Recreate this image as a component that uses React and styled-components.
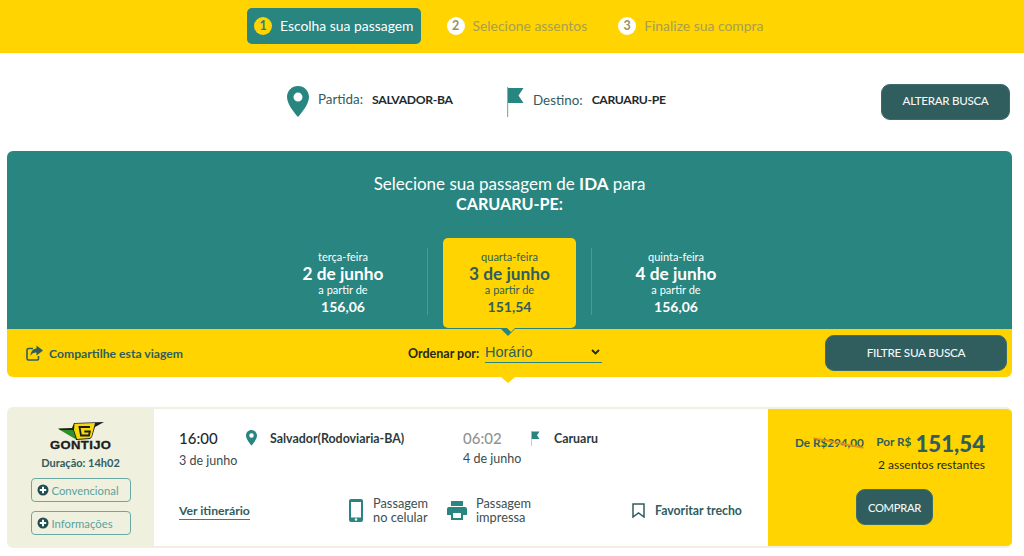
import React from "react";
import styled, { createGlobalStyle } from "styled-components";

const yellow = "#ffd400";
const teal = "#288580";
const dark = "#305d5e";
const cream = "#f0f0df";

const Global = createGlobalStyle`
  html, body {
    margin: 0;
    padding: 0;
    background: #fff;
    font-family: "Lato", "Noto Sans", sans-serif;
    overflow: hidden;
  }
  * { box-sizing: border-box; }
`;

const Page = styled.div`
  width: 1024px;
  height: 556px;
`;

const StepBar = styled.div`
  height: 53px;
  background: ${yellow};
  padding: 8px 0 0 247px;
  display: flex;
  align-items: flex-start;
`;

const Step = styled.div`
  height: 36px;
  display: flex;
  align-items: center;
  gap: 8px;
  padding: 0 7px 1px;
  margin-right: ${(p) => p.$gap || 0}px;
  border-radius: 5px;
  background: ${(p) => (p.$active ? teal : "transparent")};
  color: ${(p) => (p.$active ? "#fff" : "#a89f52")};
  font-size: 13.9px;
  white-space: nowrap;
`;

const StepNum = styled.span`
  width: 18px;
  height: 18px;
  border-radius: 50%;
  display: flex;
  align-items: center;
  justify-content: center;
  font-size: 12.5px;
  font-weight: 700;
  background: ${(p) => (p.$active ? yellow : "#fff")};
  color: ${(p) => (p.$active ? teal : "#96906a")};
`;

const SearchRow = styled.div`
  height: 98px;
  display: flex;
  align-items: center;
  padding: 0 14px 0 287px;
`;

const Place = styled.div`
  display: flex;
  align-items: center;
  width: ${(p) => p.$width}px;
`;

const PlaceLabel = styled.span`
  color: ${dark};
  font-size: 13.4px;
  margin: 0 9px 5px ${(p) => p.$left}px;
`;

const PlaceValue = styled.b`
  color: #1e2b2e;
  font-size: 12.2px;
  letter-spacing: -0.35px;
  margin-bottom: 5px;
`;

const DarkButton = styled.button`
  height: 36px;
  width: ${(p) => p.$width}px;
  margin-left: ${(p) => p.$left || 0}px;
  background: ${dark};
  color: #f2f6f4;
  border: 1px solid #3c6d6c;
  border-radius: 9px;
  font-family: inherit;
  font-size: ${(p) => p.$size || 11.6}px;
  font-weight: 500;
  letter-spacing: -0.3px;
  padding: 0 0 ${(p) => p.$lift ?? 2}px;
`;

const Panel = styled.section`
  margin: 0 12px 0 7px;
  position: relative;
`;

const TealArea = styled.div`
  height: 178px;
  background: ${teal};
  border-radius: 6px 6px 0 0;
  padding-top: 23px;
  color: #fff;
`;

const Heading = styled.h1`
  margin: 0;
  text-align: center;
  font-size: 17px;
  line-height: 20px;
  font-weight: 400;
  b { font-weight: 700; }
  b + br + b { font-size: 16.2px; }
`;

const DateRow = styled.div`
  display: flex;
  padding-left: 252px;
  margin-top: 24px;
`;

const DateItem = styled.div`
  width: ${(p) => p.$width}px;
  height: 90px;
  display: flex;
  justify-content: ${(p) => (p.$selected ? "center" : "flex-start")};
`;

const DateBody = styled.div`
  width: ${(p) => p.$width}px;
  height: 90px;
  padding-top: 12px;
  text-align: center;
  border-radius: 5px;
  background: ${(p) => (p.$selected ? yellow : "transparent")};
  color: ${(p) => (p.$selected ? dark : "#fff")};
`;

const Divider = styled.div`
  width: 1px;
  height: 67px;
  margin-top: 10px;
  background: #4b9a95;
`;

const Weekday = styled.div`
  font-size: 11px;
  line-height: 14px;
`;

const DayName = styled.div`
  font-size: 17.3px;
  line-height: 20px;
  font-weight: 700;
`;

const From = styled.div`
  font-size: 11px;
  line-height: 12px;
`;

const DayPrice = styled.div`
  font-size: 14px;
  line-height: 22px;
  font-weight: 700;
`;

const Toolbar = styled.div`
  height: 48px;
  background: ${yellow};
  border-radius: 0 0 6px 6px;
  display: flex;
  align-items: center;
  padding: 0 5px 0 19px;
  position: relative;
`;

const ArrowDown = styled.div`
  position: absolute;
  left: 494px;
  top: ${(p) => (p.$outer ? "48px" : "0")};
  width: 0;
  height: 0;
  border-left: 7px solid transparent;
  border-right: 7px solid transparent;
  border-top: ${(p) => (p.$outer ? 6 : 7)}px solid ${(p) => (p.$outer ? yellow : teal)};
`;

const ArrowInner = styled.div`
  position: absolute;
  left: 499px;
  top: -2px;
  width: 0;
  height: 0;
  border-left: 5px solid transparent;
  border-right: 5px solid transparent;
  border-top: 5px solid ${yellow};
`;

const Share = styled.div`
  display: flex;
  align-items: center;
  gap: 6px;
  width: 382px;
  font-size: 12.2px;
  font-weight: 700;
  color: ${dark};
`;

const SortLabel = styled.span`
  width: 77px;
  font-size: 12.5px;
  font-weight: 700;
  color: #232a1a;
`;

const SelectWrap = styled.div`
  position: relative;
  width: 117px;
  height: 21px;
  margin-top: -2px;
  border-bottom: 1px solid ${teal};
  svg {
    position: absolute;
    right: 2px;
    top: 6px;
  }
`;

const SortSelect = styled.select`
  appearance: none;
  display: block;
  width: 100%;
  height: 20px;
  border: 0;
  padding: 0;
  background: transparent;
  font-family: "Liberation Sans", sans-serif;
  font-size: 14.5px;
  color: ${dark};
`;

const Card = styled.article`
  margin: 30px 12px 0 7px;
  height: 141px;
  display: flex;
  border-radius: 6px;
  overflow: hidden;
  border-top: 2px solid ${cream};
  border-bottom: 2px solid ${cream};
`;

const Company = styled.div`
  width: 147px;
  background: ${cream};
  display: flex;
  flex-direction: column;
  align-items: center;
  padding-top: 13px;
`;

const LogoText = styled.div`
  font-family: "Liberation Sans", sans-serif;
  font-weight: 700;
  font-size: 10.5px;
  line-height: 10px;
  letter-spacing: 0.3px;
  color: #1c1c1c;
  -webkit-text-stroke: 0.3px #1c1c1c;
  transform: scaleX(1.24);
`;

const Duration = styled.div`
  margin: 6px 0 -1px;
  font-size: 11px;
  line-height: 14px;
  font-weight: 700;
  color: ${dark};
`;

const TagButton = styled.div`
  width: 100px;
  height: 24px;
  margin-top: 9px;
  border: 1.5px solid #6aa9a3;
  border-radius: 4px;
  display: flex;
  align-items: center;
  gap: 3px;
  padding-left: 5px;
  font-size: 11.3px;
  color: #5aa29c;
`;

const Middle = styled.div`
  width: 614px;
  padding: 19px 0 0 25px;
  background: #fff;
`;

const TopRow = styled.div`
  display: flex;
  height: 66px;
`;

const Leg = styled.div`
  width: ${(p) => p.$width}px;
`;

const LegLine = styled.div`
  display: flex;
  align-items: center;
  height: 20px;
`;

const Time = styled.span`
  width: ${(p) => p.$width}px;
  font-size: 15px;
  font-weight: 500;
  color: ${(p) => (p.$muted ? "#8f9393" : "#1e2b2e")};
`;

const Terminal = styled.span`
  margin-left: ${(p) => p.$left}px;
  font-size: 12.4px;
  font-weight: 700;
  color: #2c3a3c;
`;

const LegDate = styled.div`
  font-size: 12.5px;
  color: #3d4a4c;
  margin-top: ${(p) => p.$top}px;
`;

const BottomRow = styled.div`
  display: flex;
  align-items: center;
  height: 32px;
`;

const Itinerary = styled.div`
  width: 170px;
  font-size: 12.2px;
  font-weight: 700;
  color: ${dark};
  span {
    border-bottom: 1px solid ${teal};
    padding-bottom: 1px;
  }
`;

const Ticket = styled.div`
  width: ${(p) => p.$width}px;
  display: flex;
  align-items: center;
  gap: ${(p) => p.$gap}px;
  font-size: 12.8px;
  line-height: 14px;
  color: #3d4f50;
`;

const Favorite = styled.div`
  display: flex;
  align-items: center;
  gap: 10px;
  margin-left: 6px;
  font-size: 12.3px;
  font-weight: 700;
  color: ${dark};
`;

const PriceBox = styled.div`
  flex: 1;
  background: ${yellow};
  padding: 21px 27px 0 27px;
  display: flex;
  flex-direction: column;
  align-items: flex-end;
`;

const PriceLine = styled.div`
  display: flex;
  align-items: center;
  justify-content: space-between;
  width: 100%;
  height: 27px;
  color: ${dark};
  font-weight: 700;
`;

const OldPriceGroup = styled.span`
  font-size: 11.7px;
  margin-bottom: 3px;
`;

const OldPrice = styled.span`
  position: relative;
  &::after {
    content: "";
    position: absolute;
    left: 0;
    right: 0;
    top: 7px;
    height: 1.5px;
    background: #e8901a;
    transform: rotate(11deg);
  }
`;

const NowGroup = styled.span`
  display: flex;
  align-items: center;
  gap: 4px;
  font-size: 11.8px;
  span { margin-bottom: 4px; }
`;

const NewPrice = styled.b`
  font-size: 22.2px;
`;

const Seats = styled.div`
  font-size: 12px;
  line-height: 16px;
  color: #232a1a;
`;

const BuyRow = styled.div`
  align-self: flex-start;
  margin: 16px 0 0 61px;
`;

function Pin({ size = 22 }) {
  return (
    <svg width={size} height={size * 1.42} viewBox="0 0 22 31">
      <path fill={teal} fillRule="evenodd" d="M11 0C4.9 0 0 4.9 0 11c0 7.4 8 16.4 11 20 3-3.600 11-12.600 11-20C22 4.900 17.100 0 11 0zm0 6.500a4.500 4.500 0 1 1 0 9 4.500 4.500 0 0 1 0-9z" />
    </svg>
  );
}

function Flag({ width = 17, height = 30 }) {
  return (
    <svg width={width} height={height} viewBox="0 0 17 30">
      <path fill="#7fb5b1" d="M0 0h1.200v30H0z" />
      <path fill={teal} d="M1 1h15.500l-5 7.500 5 7.500H1z" />
    </svg>
  );
}

function Plus() {
  return (
    <svg width="12" height="12" viewBox="0 0 12 12">
      <circle cx="6" cy="6" r="5.500" fill="#1f4f50" />
      <path fill="#fff" d="M5 2.800h2V5h2.200v2H7v2.200H5V7H2.800V5H5z" />
    </svg>
  );
}

function Logo() {
  return (
    <svg width="46" height="18" viewBox="0 0 46 18">
      <path fill="#1c1c1c" d="M0 6.500 14 6 16 1 46 0 37 5 34 15 32 17 18 18 15 9 2 8z" />
      <path fill="#2f8f2a" d="M2 8h13l3 9.500z" />
      <path fill="#f5d90a" d="M16.500 1.700 37 1 33.500 14.500 32 16 19 17 16 8z" />
      <path fill="none" stroke="#1c1c1c" strokeWidth="1.800" d="M32 5H21.500l1.500 8.500h8l.8-4h-5.500" />
    </svg>
  );
}

export default function App() {
  return (
    <Page>
      <Global />
      <StepBar>
        <Step $active $gap={19}>
          <StepNum $active>1</StepNum>Escolha sua passagem
        </Step>
        <Step $gap={17}>
          <StepNum>2</StepNum>Selecione assentos
        </Step>
        <Step>
          <StepNum>3</StepNum>Finalize sua compra
        </Step>
      </StepBar>

      <SearchRow>
        <Place $width={220}>
          <Pin />
          <PlaceLabel $left={9}>Partida:</PlaceLabel>
          <PlaceValue>SALVADOR-BA</PlaceValue>
        </Place>
        <Place $width={374}>
          <Flag />
          <PlaceLabel $left={9}>Destino:</PlaceLabel>
          <PlaceValue>CARUARU-PE</PlaceValue>
        </Place>
        <DarkButton $width={129} $lift={3}>ALTERAR BUSCA</DarkButton>
      </SearchRow>

      <Panel>
        <TealArea>
          <Heading>
            Selecione sua passagem de <b>IDA</b> para
            <br />
            <b>CARUARU-PE:</b>
          </Heading>
          <DateRow>
            <DateItem $width={168}>
              <DateBody $width={168}>
                <Weekday>terça-feira</Weekday>
                <DayName>2 de junho</DayName>
                <From>a partir de</From>
                <DayPrice>156,06</DayPrice>
              </DateBody>
            </DateItem>
            <Divider />
            <DateItem $width={163} $selected>
              <DateBody $width={133} $selected>
                <Weekday>quarta-feira</Weekday>
                <DayName>3 de junho</DayName>
                <From>a partir de</From>
                <DayPrice>151,54</DayPrice>
              </DateBody>
            </DateItem>
            <Divider />
            <DateItem $width={168}>
              <DateBody $width={168}>
                <Weekday>quinta-feira</Weekday>
                <DayName>4 de junho</DayName>
                <From>a partir de</From>
                <DayPrice>156,06</DayPrice>
              </DateBody>
            </DateItem>
          </DateRow>
        </TealArea>
        <Toolbar>
          <ArrowDown />
          <ArrowInner />
          <Share>
            <svg width="17" height="16" viewBox="0 0 17 16">
              <path fill="none" stroke={dark} strokeWidth="1.600" d="M7 3.500H2.500a1.500 1.500 0 0 0-1.500 1.500v8.500A1.500 1.500 0 0 0 2.500 15h8.500a1.500 1.500 0 0 0 1.500-1.500V11" />
              <path fill={dark} d="M10.500 0.500 17 5.500l-6.500 5V7.500C7.500 7.500 5.500 8.500 4.500 11c0-4 2-7 6-7.500z" />
            </svg>
            Compartilhe esta viagem
          </Share>
          <SortLabel>Ordenar por:</SortLabel>
          <SelectWrap>
            <SortSelect defaultValue="Horário">
              <option>Horário</option>
              <option>Preço</option>
            </SortSelect>
            <svg width="9" height="8" viewBox="0 0 9 8">
              <path fill="none" stroke="#1e2b2e" strokeWidth="1.800" d="M1 2l3.500 3.500L8 2" />
            </svg>
          </SelectWrap>
          <DarkButton $width={182} $left={223} $size={11.8}>FILTRE SUA BUSCA</DarkButton>
          <ArrowDown $outer />
        </Toolbar>
      </Panel>

      <Card>
        <Company>
          <Logo />
          <LogoText>GONTIJO</LogoText>
          <Duration>Duração: 14h02</Duration>
          <TagButton>
            <Plus />
            Convencional
          </TagButton>
          <TagButton>
            <Plus />
            Informações
          </TagButton>
        </Company>
        <Middle>
          <TopRow>
            <Leg $width={284}>
              <LegLine>
                <Time $width={67}>16:00</Time>
                <Pin size={11} />
                <Terminal $left={13}>Salvador(Rodoviaria-BA)</Terminal>
              </LegLine>
              <LegDate $top={5}>3 de junho</LegDate>
            </Leg>
            <Leg $width={200}>
              <LegLine>
                <Time $width={68} $muted>06:02</Time>
                <Flag width={9} height={15} />
                <Terminal $left={14}>Caruaru</Terminal>
              </LegLine>
              <LegDate $top={3}>4 de junho</LegDate>
            </Leg>
          </TopRow>
          <BottomRow>
            <Itinerary><span>Ver itinerário</span></Itinerary>
            <Ticket $width={98} $gap={10}>
              <svg width="14" height="23" viewBox="0 0 14 23">
                <path fill={teal} fillRule="evenodd" d="M2 0h10a2 2 0 0 1 2 2v19a2 2 0 0 1-2 2H2a2 2 0 0 1-2-2V2a2 2 0 0 1 2-2zm0 3v15.500h10V3zm5 16.200a1.300 1.300 0 1 0 0 2.600 1.300 1.300 0 0 0 0-2.600z" />
              </svg>
              <span>Passagem<br />no celular</span>
            </Ticket>
            <Ticket $width={179} $gap={9}>
              <svg width="20" height="19" viewBox="0 0 20 19">
                <path fill={teal} fillRule="evenodd" d="M4 0h12v5H4zM2 6h16a2 2 0 0 1 2 2v6h-4v5H4v-5H0V8a2 2 0 0 1 2-2zm4 6v5h8v-5z" />
              </svg>
              <span>Passagem<br />impressa</span>
            </Ticket>
            <Favorite>
              <svg width="13" height="15" viewBox="0 0 13 15">
                <path fill="none" stroke={dark} strokeWidth="1.500" d="M1 1h11v13l-5.500-4L1 14z" />
              </svg>
              Favoritar trecho
            </Favorite>
          </BottomRow>
        </Middle>
        <PriceBox>
          <PriceLine>
            <OldPriceGroup>De <OldPrice>R$294,00</OldPrice></OldPriceGroup>
            <NowGroup><span>Por R$</span><NewPrice>151,54</NewPrice></NowGroup>
          </PriceLine>
          <Seats>2 assentos restantes</Seats>
          <BuyRow>
            <DarkButton $width={77} $size={11.2} $lift={0}>COMPRAR</DarkButton>
          </BuyRow>
        </PriceBox>
      </Card>
    </Page>
  );
}
